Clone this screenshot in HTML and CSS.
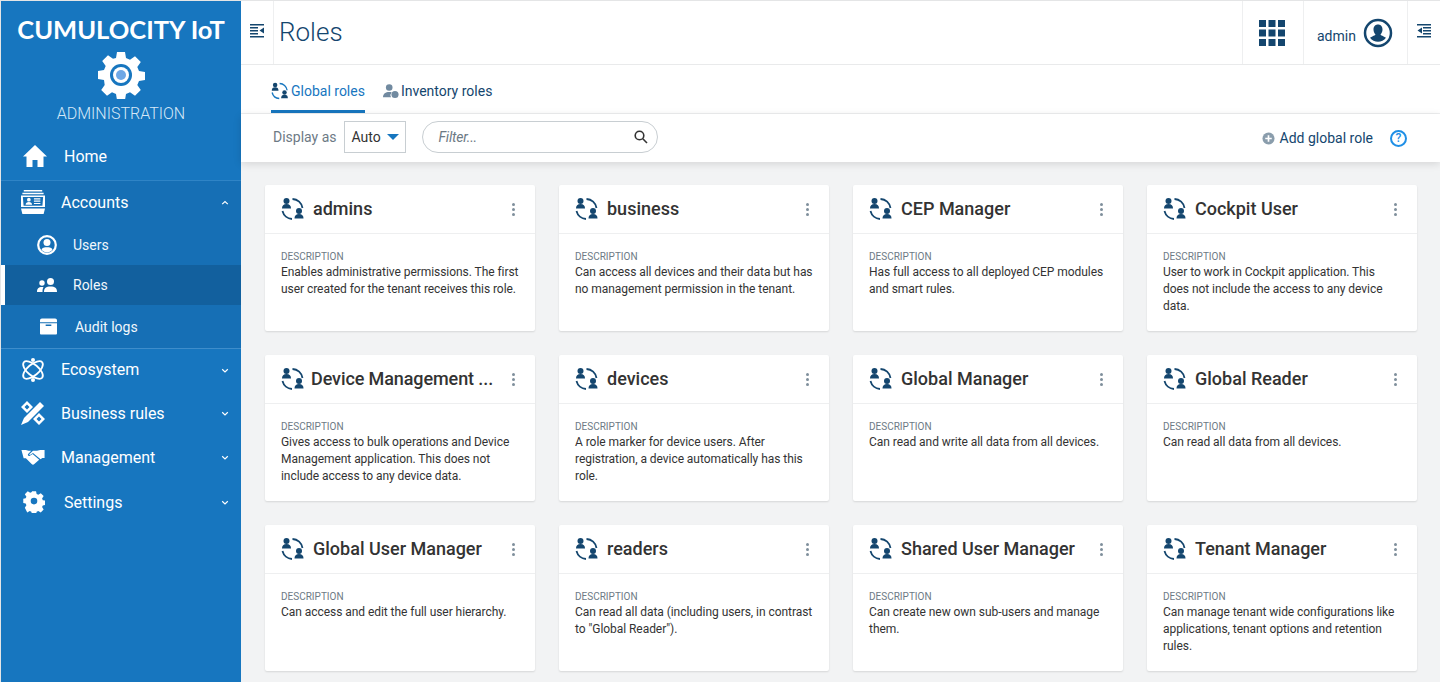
FILE: index.html
```html
<!DOCTYPE html>
<html lang="en">
<head>
    <meta charset="UTF-8">
    <meta name="viewport" content="width=device-width, initial-scale=1.0">
    <title>Roles</title>
    <link rel="stylesheet" href="styles.css">
</head>
<body>
    <svg class="sprites" width="0" height="0">
        <symbol id="role" viewBox="0 0 24 24">
            <circle cx="5.500" cy="4" r="3"/>
            <path d="M1 11.500c0-3 1.500-4.500 4.500-4.500s4.500 1.500 4.500 4.500z"/>
            <circle cx="18" cy="14" r="3"/>
            <path d="M13.500 21.500c0-3 1.500-4.500 4.500-4.500s4.500 1.500 4.500 4.500z"/>
            <path class="arc" d="M11.500 2a10.500 10.500 0 0 1 10 9M1.500 14a10.500 10.500 0 0 0 9.500 8"/>
        </symbol>
    </svg>

    <aside class="sidebar">
        <div class="brand">
            <div class="brand-name">CUMULOCITY IoT</div>
            <svg class="brand-gear" viewBox="0 0 48 48">
                <path fill="#fff" d="M20 1h8l1 6 4 1.700 5-3.500 5.800 5.800-3.500 5 1.700 4 6 1v8l-6 1-1.700 4 3.500 5-5.800 5.800-5-3.500-4 1.700-1 6h-8l-1-6-4-1.700-5 3.500-5.800-5.800 3.500-5L7 29l-6-1v-8l6-1 1.700-4-3.500-5L11 4.200l5 3.500L19 7z"/>
                <circle cx="24" cy="24" r="11" fill="#1776bf"/>
                <circle cx="24" cy="24" r="8" fill="#fff"/>
                <circle cx="24" cy="24" r="5" fill="#6ea8e6"/>
            </svg>
            <div class="brand-app">ADMINISTRATION</div>
        </div>

        <nav class="nav">
            <a class="nav-item nav-home">
                <svg class="nav-icon" viewBox="0 0 24 24"><path d="M12 1 0 12.500h3.500V23h6v-7h5v7h6V12.500H24z"/></svg>
                <span>Home</span>
            </a>

            <div class="nav-group">
                <a class="nav-item nav-accounts">
                    <svg class="nav-icon" viewBox="0 0 26 26"><path d="M3 0h20v1.700H3zM1.500 3h23v1.700h-23z"/><path fill-rule="evenodd" d="M0 6h26v12.500H0zm2 1.500.8 9.500h20.400l.8-9.500z"/><circle cx="8.500" cy="10.500" r="2"/><path d="M5 16c0-2 1.500-3 3.500-3s3.500 1 3.500 3zM14 9h7v1.200h-7zm0 2.500h7v1.200h-7zm0 2.500h7v1.200h-7zM0 20h26l-1.500 6h-23z"/></svg>
                    <span>Accounts</span>
                    <svg class="chev" viewBox="0 0 10 6"><path d="M1.500 5 5 1.800 8.500 5"/></svg>
                </a>
                <a class="sub-item sub-users">
                    <svg class="sub-icon" viewBox="0 0 20 20"><circle class="ring" cx="10" cy="10" r="8.800"/><circle cx="10" cy="7.500" r="3.500"/><path d="M4.500 15c.5-2.500 3-2.800 5.500-2.800s5 .3 5.500 2.800a7.500 7.500 0 0 1-11 0z"/></svg>
                    <span>Users</span>
                </a>
                <a class="sub-item active">
                    <svg class="sub-icon" viewBox="0 0 20 14"><circle cx="13.500" cy="3.500" r="3.500"/><path d="M7 14c0-4 2-5.500 6.500-5.500S20 10 20 14z"/><circle cx="5" cy="5" r="2.700"/><path d="M0 14c0-3.500 1.500-5 5-5 .7 0 1.200.1 1.500.3C5.700 10.500 5.500 12 5.500 14z"/></svg>
                    <span>Roles</span>
                </a>
                <a class="sub-item sub-audit">
                    <svg class="sub-icon" viewBox="0 0 18 17"><path fill-rule="evenodd" d="M2 0h14a2 2 0 0 1 2 2v2H0V2a2 2 0 0 1 2-2zM0 5h18v11a1 1 0 0 1-1 1H1a1 1 0 0 1-1-1zm6 1.500V8h6V6.500z"/></svg>
                    <span>Audit logs</span>
                </a>
            </div>

            <a class="nav-item nav-eco">
                <svg class="nav-icon" viewBox="0 0 24 24"><g class="line"><ellipse cx="12" cy="12" rx="12" ry="5.500" transform="rotate(40 12 12)"/><ellipse cx="12" cy="12" rx="12" ry="5.500" transform="rotate(-40 12 12)"/></g><circle cx="12" cy="2" r="2"/><circle cx="12" cy="22" r="2"/></svg>
                <span>Ecosystem</span>
                <svg class="chev" viewBox="0 0 10 6"><path d="M1.500 1.500 5 4.700 8.500 1.500"/></svg>
            </a>
            <a class="nav-item nav-rules">
                <svg class="nav-icon" viewBox="0 0 24 24"><path d="M19 1l4 4L7 21l-7 3 3-7z"/><path fill-rule="evenodd" d="M6 0 0 6l6 6 6-6zm0 3.500L8.500 6 6 8.500 3.500 6zM18 12l-6 6 6 6 6-6zm0 3.500 2.500 2.500-2.500 2.500-2.500-2.500z"/></svg>
                <span>Business rules</span>
                <svg class="chev" viewBox="0 0 10 6"><path d="M1.500 1.500 5 4.700 8.500 1.500"/></svg>
            </a>
            <a class="nav-item nav-manage">
                <svg class="nav-icon" viewBox="0 0 26 18"><path d="M0 1h5l3 1h3L7.500 5.500c-1 1.200.5 3 2 2l3-2 7.500 6.500-5.500 5c-1 .8-2 .8-3 0L5 10.500H2.500z"/><path d="M26 1h-5l-3.500 1H13L9 5.500c-.5 1 .5 1.500 1 1l3-2 8.500 7 2-1.500H26z"/></svg>
                <span>Management</span>
                <svg class="chev" viewBox="0 0 10 6"><path d="M1.500 1.500 5 4.700 8.500 1.500"/></svg>
            </a>
            <a class="nav-item nav-settings">
                <svg class="nav-icon" viewBox="0 0 24 24"><path fill-rule="evenodd" d="M9.500 0h5l.7 3.400 2 .9 3-1.900 3.500 3.500-1.900 3 .9 2 3.400.7v5l-3.400.7-.9 2 1.900 3-3.500 3.500-3-1.900-2 .9-.7 3.400h-5l-.7-3.400-2-.9-3 1.900L.9 20l1.900-3-.9-2L-1 14.300v-5L1.900 8.600l.9-2-1.900-3 3.500-3.500 3 1.900 2-.9zM12 8a4 4 0 1 0 0 8 4 4 0 0 0 0-8z" transform="translate(1.200 .2) scale(.9)"/></svg>
                <span>Settings</span>
                <svg class="chev" viewBox="0 0 10 6"><path d="M1.500 1.500 5 4.700 8.500 1.500"/></svg>
            </a>
        </nav>
    </aside>

    <main class="main">
        <header class="topbar">
            <button class="toggle">
                <svg viewBox="0 0 14 14"><path d="M0 0h14v1.500H0zM0 3h8v1.500H0zm0 3h8v1.500H0zm0 3h8v1.500H0zm0 3h14v1.500H0zM14 3.500v6L9.500 6.500z"/></svg>
            </button>
            <h1 class="page-title">Roles</h1>
            <div class="top-apps">
                <svg viewBox="0 0 26 26"><path d="M0 0h7v7H0zm9.500 0h7v7h-7zM19 0h7v7h-7zM0 9.500h7v7H0zm9.500 0h7v7h-7zm9.500 0h7v7h-7zM0 19h7v7H0zm9.500 0h7v7h-7zm9.500 0h7v7h-7z"/></svg>
            </div>
            <div class="top-user">
                <span>admin</span>
                <svg viewBox="0 0 30 30"><circle class="ring" cx="15" cy="15" r="13"/><path d="M15 6.500c3 0 4.500 2.300 4.500 5 0 2-.8 3.800-2 5 .2 1 3 1.500 5.500 3.300a10 10 0 0 1-16 0c2.500-1.800 5.300-2.300 5.500-3.300-1.200-1.200-2-3-2-5 0-2.700 1.500-5 4.500-5z"/></svg>
            </div>
            <button class="toggle toggle-right">
                <svg viewBox="0 0 14 14"><path d="M0 0h14v1.500H0zM6 3h8v1.500H6zm0 3h8v1.500H6zm0 3h8v1.500H6zM0 12h14v1.500H0zM5 3.500v6L.5 6.500z"/></svg>
            </button>
        </header>

        <div class="tabs">
            <a class="tab active">
                <svg class="tab-icon"><use href="#role"/></svg>
                Global roles
            </a>
            <a class="tab">
                <svg class="tab-icon" viewBox="0 0 18 16"><circle cx="7" cy="4" r="3.700"/><path d="M0 15c0-4 3-6 7-6 1 0 2 .1 2.800.4A5 5 0 0 0 9 15z"/><circle cx="13.500" cy="12" r="4"/></svg>
                Inventory roles
            </a>
        </div>

        <div class="toolbar">
            <label class="display-label">Display as</label>
            <div class="select">Auto <span class="caret"></span></div>
            <div class="filter">
                <span>Filter...</span>
                <svg viewBox="0 0 14 14"><circle cx="5.500" cy="5.500" r="4.300"/><path d="M8.800 8.800 13 13"/></svg>
            </div>
            <a class="add-role">
                <svg viewBox="0 0 14 14"><circle cx="7" cy="7" r="6.500"/><path d="M7 3.500v7M3.500 7h7"/></svg>
                Add global role
            </a>
            <div class="help">?</div>
        </div>

        <section class="cards">
            <article class="card">
                <div class="card-head"><svg class="card-icon"><use href="#role"/></svg><h2>admins</h2><span class="dots"><i></i><i></i><i></i></span></div>
                <div class="card-body"><small>Description</small><p>Enables administrative permissions. The first user created for the tenant receives this role.</p></div>
            </article>
            <article class="card">
                <div class="card-head"><svg class="card-icon"><use href="#role"/></svg><h2>business</h2><span class="dots"><i></i><i></i><i></i></span></div>
                <div class="card-body"><small>Description</small><p>Can access all devices and their data but has no management permission in the tenant.</p></div>
            </article>
            <article class="card">
                <div class="card-head"><svg class="card-icon"><use href="#role"/></svg><h2>CEP Manager</h2><span class="dots"><i></i><i></i><i></i></span></div>
                <div class="card-body"><small>Description</small><p>Has full access to all deployed CEP modules and smart rules.</p></div>
            </article>
            <article class="card">
                <div class="card-head"><svg class="card-icon"><use href="#role"/></svg><h2>Cockpit User</h2><span class="dots"><i></i><i></i><i></i></span></div>
                <div class="card-body"><small>Description</small><p>User to work in Cockpit application. This does not include the access to any device data.</p></div>
            </article>
            <article class="card">
                <div class="card-head"><svg class="card-icon"><use href="#role"/></svg><h2 class="tight">Device Management ...</h2><span class="dots"><i></i><i></i><i></i></span></div>
                <div class="card-body"><small>Description</small><p>Gives access to bulk operations and Device Management application. This does not include access to any device data.</p></div>
            </article>
            <article class="card">
                <div class="card-head"><svg class="card-icon"><use href="#role"/></svg><h2>devices</h2><span class="dots"><i></i><i></i><i></i></span></div>
                <div class="card-body"><small>Description</small><p>A role marker for device users. After registration, a device automatically has this role.</p></div>
            </article>
            <article class="card">
                <div class="card-head"><svg class="card-icon"><use href="#role"/></svg><h2>Global Manager</h2><span class="dots"><i></i><i></i><i></i></span></div>
                <div class="card-body"><small>Description</small><p>Can read and write all data from all devices.</p></div>
            </article>
            <article class="card">
                <div class="card-head"><svg class="card-icon"><use href="#role"/></svg><h2>Global Reader</h2><span class="dots"><i></i><i></i><i></i></span></div>
                <div class="card-body"><small>Description</small><p>Can read all data from all devices.</p></div>
            </article>
            <article class="card">
                <div class="card-head"><svg class="card-icon"><use href="#role"/></svg><h2>Global User Manager</h2><span class="dots"><i></i><i></i><i></i></span></div>
                <div class="card-body"><small>Description</small><p>Can access and edit the full user hierarchy.</p></div>
            </article>
            <article class="card">
                <div class="card-head"><svg class="card-icon"><use href="#role"/></svg><h2>readers</h2><span class="dots"><i></i><i></i><i></i></span></div>
                <div class="card-body"><small>Description</small><p>Can read all data (including users, in contrast to "Global Reader").</p></div>
            </article>
            <article class="card">
                <div class="card-head"><svg class="card-icon"><use href="#role"/></svg><h2>Shared User Manager</h2><span class="dots"><i></i><i></i><i></i></span></div>
                <div class="card-body"><small>Description</small><p>Can create new own sub-users and manage them.</p></div>
            </article>
            <article class="card">
                <div class="card-head"><svg class="card-icon"><use href="#role"/></svg><h2>Tenant Manager</h2><span class="dots"><i></i><i></i><i></i></span></div>
                <div class="card-body"><small>Description</small><p>Can manage tenant wide configurations like applications, tenant options and retention rules.</p></div>
            </article>
        </section>
    </main>
</body>
</html>
```

FILE: styles.css
```css
html, body {
    height: 100%;
}
body {
    margin: 0;
    padding: 1px 0 0 1px;
    box-sizing: border-box;
    display: flex;
    overflow: hidden;
    font-family: Roboto, "Liberation Sans", sans-serif;
    font-size: 14px;
    background-color: #e4e5e6;
    color: #333;
}
.sprites {
    position: absolute;
}

/* sidebar */
.sidebar {
    width: 240px;
    flex: none;
    background-color: #1776bf;
    color: #fff;
}
.brand {
    height: 131px;
    box-sizing: border-box;
    padding-top: 14px;
    text-align: center;
}
.brand-name {
    font-family: Lato, "Liberation Sans", sans-serif;
    font-size: 25.500px;
    font-weight: 700;
    line-height: 28px;
    white-space: nowrap;
}
.brand-gear {
    display: block;
    width: 48px;
    height: 48px;
    margin: 8px auto 0;
}
.brand-app {
    margin-top: 5px;
    font-size: 16px;
    font-weight: 300;
    line-height: 20px;
    color: #d6e8f7;
}
.nav-item {
    display: flex;
    align-items: center;
    height: 44px;
    padding-left: 20px;
    font-size: 16px;
    position: relative;
}
.nav-icon {
    width: 24px;
    height: 24px;
    fill: #fff;
    flex: none;
    margin-right: 16px;
}
.nav-icon .line {
    fill: none;
    stroke: #fff;
    stroke-width: 1.800;
}
.nav-home {
    height: 48px;
    padding-left: 22px;
}
.nav-home .nav-icon {
    margin-right: 17px;
}
.nav-group {
    background-color: #166fb5;
    border-top: 1px solid #2f84c6;
    border-bottom: 1px solid #3e8dcb;
}
.nav-accounts {
    height: 42px;
}
.chev {
    position: absolute;
    right: 12px;
    top: 50%;
    width: 8px;
    height: 5px;
    margin-top: -2px;
    fill: none;
    stroke: #fff;
    stroke-width: 1.500;
}
.sub-item {
    display: flex;
    align-items: center;
    height: 40px;
    padding-left: 36px;
    font-size: 14px;
    color: #f1f7fc;
}
.sub-users {
    height: 41px;
    padding-top: 1px;
}
.sub-icon {
    width: 20px;
    height: 20px;
    fill: #fff;
    flex: none;
    margin-right: 16px;
}
.sub-icon .ring {
    fill: none;
    stroke: #fff;
    stroke-width: 2.200;
}
.sub-item.active {
    background-color: #12609e;
    border-left: 4px solid #fff;
    padding-left: 32px;
}
.sub-item.active .sub-icon {
    height: 14px;
}
.sub-audit {
    height: 43px;
    padding-left: 39px;
}
.sub-audit .sub-icon {
    width: 17px;
    height: 17px;
    margin-right: 18px;
}
.nav-eco {
    height: 41px;
}
.nav-rules {
    height: 46px;
}
.nav-manage {
    height: 42px;
}
.nav-manage .nav-icon {
    height: 16px;
}
.nav-settings {
    height: 48px;
    padding-left: 22px;
}
.nav-settings .nav-icon {
    width: 22px;
    height: 22px;
    margin-right: 19px;
}

/* main */
.main {
    flex: 1;
    min-width: 0;
    display: flex;
    flex-direction: column;
    background-color: #f2f3f4;
}
.topbar {
    display: flex;
    align-items: center;
    height: 64px;
    flex: none;
    box-sizing: border-box;
    background-color: #fff;
    border-bottom: 1px solid #e9eaeb;
    color: #14466e;
}
.toggle {
    width: 33px;
    height: 63px;
    padding: 0;
    flex: none;
    border: 0;
    border-right: 1px solid #eeeff0;
    background: none;
}
.toggle svg {
    width: 14px;
    height: 14px;
    fill: #14466e;
    display: block;
    margin: 0 0 4px 9px;
}
.toggle-right {
    border-right: 0;
    border-left: 1px solid #eeeff0;
}
.page-title {
    flex: 1;
    margin: 0 0 1px 5px;
    font-size: 26px;
    font-weight: 300;
    line-height: 36px;
    color: #14466e;
}
.top-apps {
    width: 60px;
    height: 63px;
    display: flex;
    align-items: center;
    justify-content: center;
    border-left: 1px solid #eeeff0;
    border-right: 1px solid #eeeff0;
}
.top-apps svg {
    width: 26px;
    height: 26px;
    fill: #14466e;
    margin-right: 2px;
}
.top-user {
    display: flex;
    align-items: center;
    width: 103px;
    box-sizing: border-box;
    padding-left: 13px;
    gap: 7px;
    font-size: 14px;
}
.top-user span {
    margin-top: 6px;
}
.top-user svg {
    width: 30px;
    height: 30px;
    fill: #14466e;
}
.top-user .ring {
    fill: none;
    stroke: #14466e;
    stroke-width: 2.500;
}

.tabs {
    display: flex;
    height: 49px;
    flex: none;
    box-sizing: border-box;
    padding-left: 30px;
    background-color: #fff;
    border-bottom: 1px solid #eeeff0;
    gap: 18px;
}
.tab {
    display: flex;
    align-items: center;
    height: 48px;
    box-sizing: border-box;
    padding-top: 4px;
    gap: 2px;
    font-size: 14px;
    color: #14466e;
}
.tab.active {
    color: #1776bf;
    border-bottom: 3px solid #1776bf;
    padding-top: 7px;
}
.tab-icon {
    width: 16px;
    height: 16px;
    fill: #718aa0;
}
.tab.active .tab-icon {
    width: 18px;
    height: 18px;
    fill: #14466e;
    color: #1776bf;
}
.arc {
    fill: none;
    stroke: currentColor;
    stroke-width: 1.800;
}

.toolbar {
    display: flex;
    align-items: center;
    height: 48px;
    flex: none;
    box-sizing: border-box;
    padding: 0 33px 2px 32px;
    background-color: #fff;
    box-shadow: 0 2px 8px rgba(0, 0, 0, 0.12);
    position: relative;
}
.display-label {
    color: #6d7a85;
    margin-right: 7px;
}
.select {
    display: flex;
    align-items: center;
    box-sizing: border-box;
    width: 62px;
    height: 32px;
    padding-left: 7px;
    border: 1px solid #c8ced2;
    color: #333;
}
.caret {
    width: 0;
    height: 0;
    margin-left: 6px;
    border-left: 6px solid transparent;
    border-right: 6px solid transparent;
    border-top: 6px solid #1776bf;
}
.filter {
    display: flex;
    align-items: center;
    justify-content: space-between;
    box-sizing: border-box;
    width: 236px;
    height: 32px;
    margin-left: 16px;
    padding: 0 9px 0 16px;
    border: 1px solid #c8ced2;
    border-radius: 16px;
    font-style: italic;
    letter-spacing: -0.2px;
    color: #6d7a85;
}
.filter svg {
    width: 14px;
    height: 14px;
    fill: none;
    stroke: #333;
    stroke-width: 1.600;
}
.add-role {
    display: flex;
    align-items: center;
    gap: 5px;
    margin: 2px 0 0 auto;
    color: #14466e;
}
.add-role svg {
    width: 13px;
    height: 13px;
    fill: #8a9dac;
    stroke: none;
}
.add-role svg path {
    stroke: #fff;
    stroke-width: 1.800;
}
.help {
    width: 13px;
    height: 13px;
    margin: 2px 0 0 17px;
    border: 2px solid #1f8fe6;
    border-radius: 50%;
    color: #1f8fe6;
    font-size: 12px;
    font-weight: 500;
    line-height: 13px;
    text-align: center;
}

/* cards */
.cards {
    display: grid;
    grid-template-columns: repeat(4, 270px);
    grid-auto-rows: 146px;
    gap: 24px;
    padding: 23px 0 0 24px;
}
.card {
    background-color: #fff;
    border-radius: 2px;
    box-shadow: 0 1px 2px rgba(0, 0, 0, 0.12);
}
.card-head {
    display: flex;
    align-items: center;
    height: 49px;
    box-sizing: border-box;
    padding: 0 20px 0 16px;
    border-bottom: 1px solid #eeeff0;
    color: #14466e;
}
.card-icon {
    width: 24px;
    height: 24px;
    flex: none;
    fill: #14466e;
}
.card-head h2 {
    flex: 1;
    min-width: 0;
    margin: 0 0 0 8px;
    font-size: 18px;
    font-weight: 500;
    line-height: 24px;
    color: #333;
    white-space: nowrap;
}
.card-head h2.tight {
    margin-left: 6px;
    letter-spacing: -0.1px;
}
.dots {
    display: flex;
    flex-direction: column;
    gap: 2px;
    flex: none;
    margin-left: 12px;
}
.dots i {
    width: 3px;
    height: 3px;
    border-radius: 50%;
    background-color: #7f8f9c;
}
.card-body {
    padding: 16px 14px 0 16px;
}
.card-body small {
    display: block;
    font-size: 10px;
    line-height: 14px;
    text-transform: uppercase;
    color: #6d7a85;
}
.card-body p {
    margin: 0;
    font-size: 12px;
    line-height: 17px;
    letter-spacing: -0.05px;
    color: #333;
}
```
